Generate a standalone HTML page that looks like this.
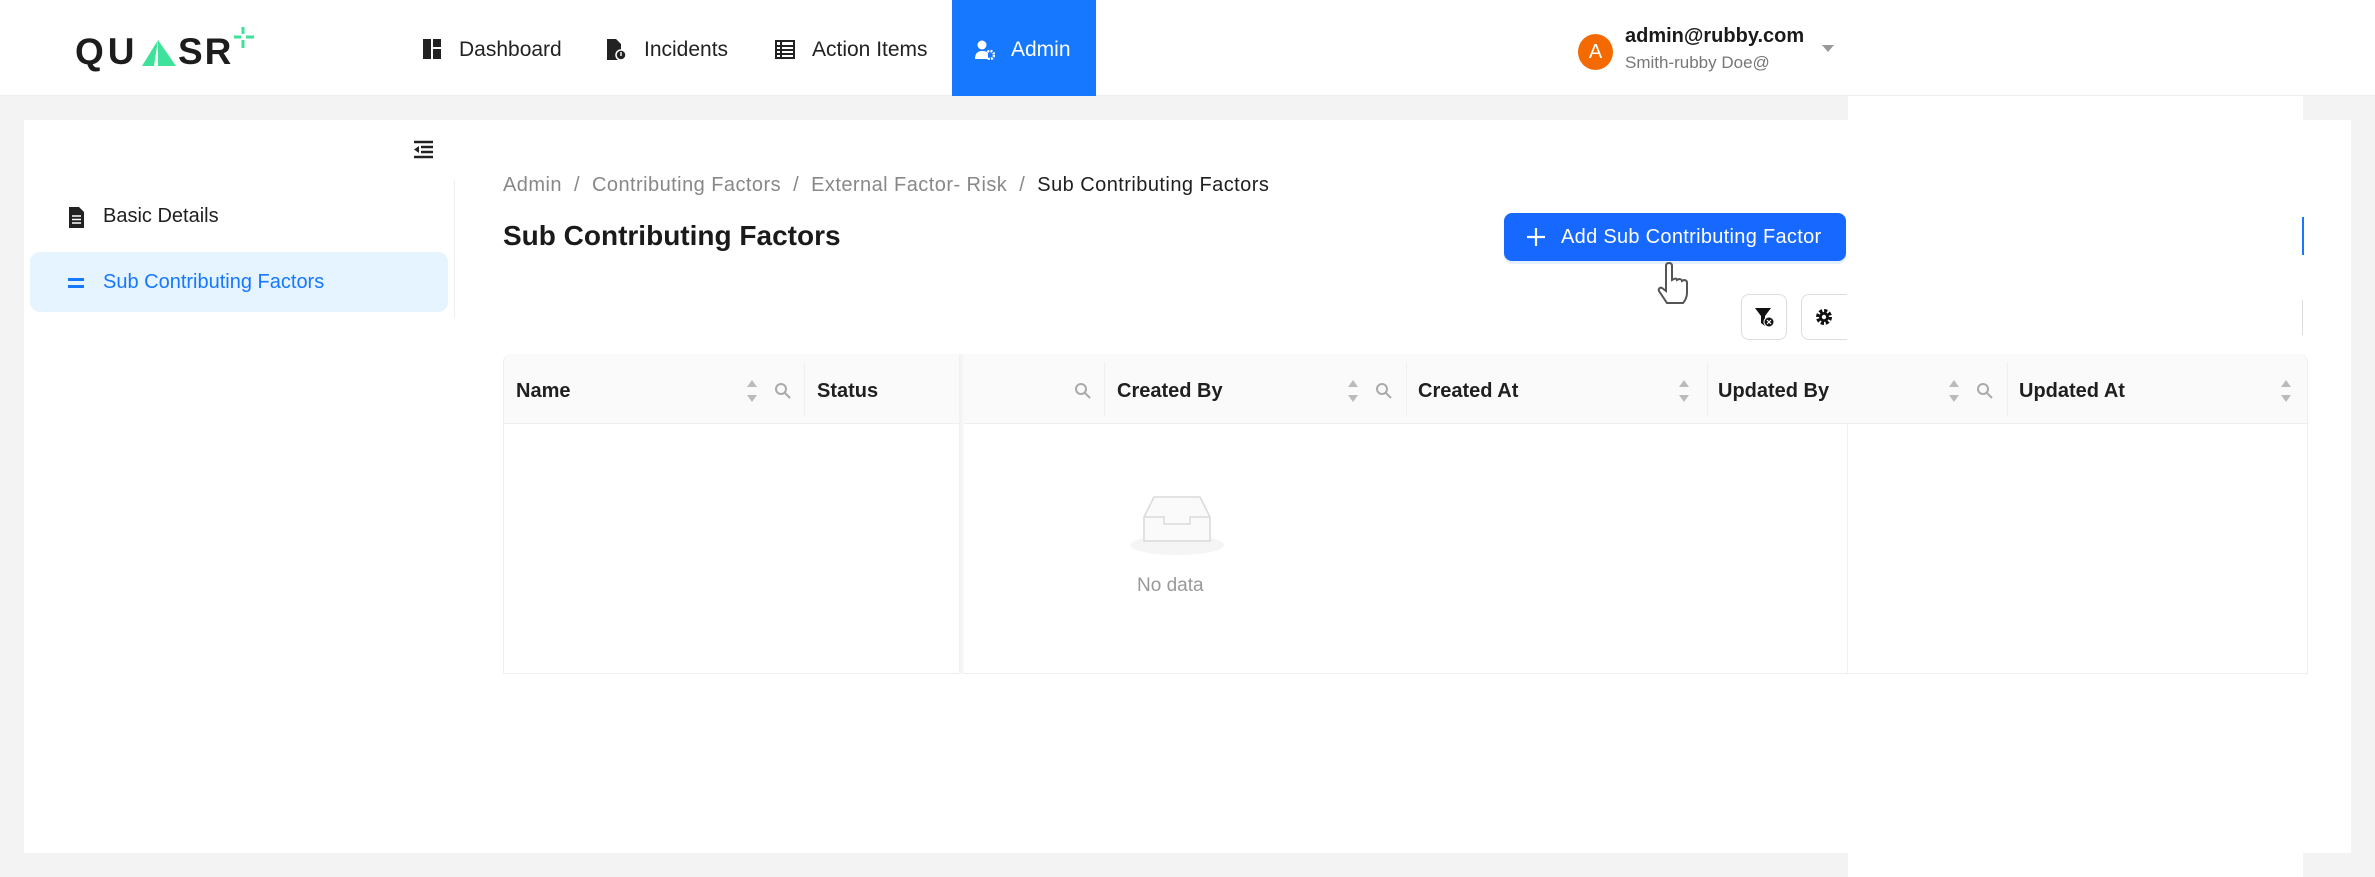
<!DOCTYPE html>
<html><head><meta charset="utf-8"><style>
*{box-sizing:border-box;margin:0;padding:0}
body{width:2375px;height:877px;background:#f3f3f3;font-family:"Liberation Sans",sans-serif;position:relative;overflow:hidden;color:#1f1f1f}
.abs{position:absolute}
.hdr{left:0;top:0;width:2375px;height:96px;background:#fff;border-bottom:1px solid #ececec}
.nav{top:0;height:96px;display:flex;align-items:center;font-size:21px;color:#222;padding-top:4px}
.card{left:24px;top:120px;width:2327px;height:733px;background:#fff}
.th{top:354px;height:70px;background:#fafafa;border-bottom:1px solid #eee;font-size:20px;font-weight:bold;display:flex;align-items:center}
.vl{width:1px;background:#f0f0f0}
</style></head><body>
<div class="abs hdr"></div>
<!-- logo -->
<div class="abs" style="left:75px;top:29px;font-size:37px;font-weight:bold;letter-spacing:4px;color:#1d1d1d;line-height:45px">QU</div>
<svg class="abs" style="left:140px;top:40px" width="36" height="26"><polygon points="18,0 36,26 18,26" fill="#3ee29a"/><polygon points="18,0 14,26 2,26" fill="#3ee29a"/></svg>
<div class="abs" style="left:178px;top:29px;font-size:37px;font-weight:bold;letter-spacing:2px;color:#1d1d1d;line-height:45px">SR</div>
<svg class="abs" style="left:232px;top:26px" width="24" height="24"><path d="M11 1v7M11 14v8M2 11h7M14 11h8" stroke="#3ee29a" stroke-width="3"/></svg>
<!-- nav -->
<svg class="abs" style="left:423px;top:39px" width="18" height="20"><rect x="0" y="0" width="8" height="20" fill="#222"/><rect x="10" y="0" width="8" height="8" fill="#222"/><rect x="10" y="10" width="8" height="10" fill="#222"/></svg>
<div class="abs nav" style="left:459px">Dashboard</div>
<svg class="abs" style="left:607px;top:39px" width="20" height="21"><path d="M0 0h9l5 5v16H0z" fill="#222"/><circle cx="14" cy="16" r="5" fill="#222" stroke="#fff" stroke-width="1.5"/><rect x="13.3" y="13" width="1.4" height="4" fill="#fff"/></svg>
<div class="abs nav" style="left:644px">Incidents</div>
<svg class="abs" style="left:775px;top:40px" width="20" height="19"><rect x="1" y="1" width="18" height="17" fill="none" stroke="#222" stroke-width="2"/><path d="M1 6h18M1 10h18M1 14h18M6 1v17" stroke="#222" stroke-width="2"/></svg>
<div class="abs nav" style="left:812px">Action Items</div>
<div class="abs" style="left:952px;top:0;width:144px;height:96px;background:#1677ff"></div>
<svg class="abs" style="left:975px;top:40px" width="20" height="20"><circle cx="7" cy="5" r="4.5" fill="#fff"/><path d="M0 19c0-6 3-8 7-8s5 1 6 2v6z" fill="#fff"/><circle cx="15" cy="15" r="4" fill="none" stroke="#fff" stroke-width="2.5" stroke-dasharray="2 1.2"/></svg>
<div class="abs nav" style="left:1011px;color:#fff">Admin</div>
<!-- user -->
<div class="abs" style="left:1578px;top:34px;width:35px;height:36px;border-radius:50%;background:#f56a00;color:#fff;font-size:20px;text-align:center;line-height:36px">A</div>
<div class="abs" style="left:1625px;top:25px;font-size:20px;font-weight:bold;color:#1a1a1a">admin@rubby.com</div>
<div class="abs" style="left:1625px;top:53px;font-size:17px;color:#777">Smith-rubby Doe@</div>
<div class="abs" style="left:1822px;top:45px;width:0;height:0;border-left:6px solid transparent;border-right:6px solid transparent;border-top:7px solid #999"></div>
<!-- card -->
<div class="abs card"></div>
<div class="abs" style="left:1848px;top:96px;width:455px;height:781px;background:#fff"></div>
<svg class="abs" style="left:413px;top:140px" width="22" height="20"><path d="M1 2h19M8 7h12M8 12h12M1 17h19" stroke="#222" stroke-width="2.5"/><path d="M6 6l-5 3.5 5 3.5z" fill="#222"/></svg>
<div class="abs vl" style="left:454px;top:180px;height:138px;background:#eee"></div>
<svg class="abs" style="left:69px;top:207px" width="15" height="21"><path d="M0 0h10l5 5v16H0z" fill="#222"/><path d="M3 9h9M3 12.5h9M3 16h9" stroke="#fff" stroke-width="1.5"/></svg>
<div class="abs" style="left:103px;top:205px;font-size:20px">Basic Details</div>
<div class="abs" style="left:30px;top:252px;width:418px;height:60px;border-radius:10px;background:#e6f4ff"></div>
<div class="abs" style="left:68px;top:278px;width:16px;height:3px;background:#1677ff"></div>
<div class="abs" style="left:68px;top:285px;width:16px;height:3px;background:#1677ff"></div>
<div class="abs" style="left:103px;top:271px;font-size:20px;color:#1677ff">Sub Contributing Factors</div>
<!-- breadcrumb -->
<div class="abs" style="left:503px;top:174px;font-size:20px;color:#888;white-space:pre;letter-spacing:0.45px">Admin  /  Contributing Factors  /  External Factor- Risk  /  <span style="color:#1f1f1f">Sub Contributing Factors</span></div>
<div class="abs" style="left:503px;top:220px;font-size:28px;font-weight:bold;color:#1a1a1a">Sub Contributing Factors</div>
<div class="abs" style="left:1504px;top:213px;width:342px;height:48px;border-radius:8px;background:#1668ff;box-shadow:0 3px 0 #e4efff;color:#fff;font-size:20px;line-height:48px;padding-left:57px;letter-spacing:0.3px">Add Sub Contributing Factor</div>
<svg class="abs" style="left:1527px;top:228px" width="18" height="18"><path d="M9 0v18M0 9h18" stroke="#fff" stroke-width="2.2"/></svg>
<svg class="abs" style="left:1655px;top:261px" width="44" height="52"><path d="M14 2c2 0 3 1 3 3v14l2-1c2-1 3 0 3 1l2-1c2 0 3 1 3 2l2-1c2 0 3 1 3 3v10c0 4-2 8-4 10H12L4 30c-1-2 1-4 3-3l4 3V5c0-2 1-3 3-3z" fill="#fff" stroke="#555" stroke-width="2"/></svg>
<div class="abs" style="left:2302px;top:217px;width:2px;height:38px;background:#1677ff"></div>
<div class="abs" style="left:2302px;top:300px;width:1px;height:35px;background:#ddd"></div>
<div class="abs" style="left:1741px;top:294px;width:46px;height:46px;border:1px solid #ddd;border-radius:8px;background:#fff"></div>
<svg class="abs" style="left:1755px;top:308px" width="20" height="20"><path d="M0 0h16l-6 8v10l-4-3V8z" fill="#111"/><circle cx="14" cy="14" r="5" fill="#111" stroke="#fff" stroke-width="1"/><path d="M12 12l4 4M16 12l-4 4" stroke="#fff" stroke-width="1.2"/></svg>
<div class="abs" style="left:1801px;top:294px;width:46px;height:46px;border:1px solid #ddd;border-right:none;border-radius:8px 0 0 8px;background:#fff"></div>
<svg class="abs" style="left:1814px;top:307px" width="20" height="20"><circle cx="10" cy="10" r="6" fill="none" stroke="#111" stroke-width="4" stroke-dasharray="3 1.7"/><circle cx="10" cy="10" r="5" fill="#111"/><circle cx="10" cy="10" r="2.2" fill="#fff"/></svg>
<!-- table -->
<div class="abs" style="left:503px;top:354px;width:1805px;height:320px;border:1px solid #eee;border-radius:8px 8px 0 0;background:#fff"></div>
<div class="abs th" style="left:504px;width:1803px;border-radius:8px 8px 0 0"></div>
<div class="abs vl" style="left:804px;top:362px;height:54px"></div>
<div class="abs" style="left:959px;top:354px;width:5px;height:320px;background:linear-gradient(90deg,#f0f0f0,#fafafa)"></div>
<div class="abs vl" style="left:1104px;top:362px;height:54px"></div>
<div class="abs vl" style="left:1406px;top:362px;height:54px"></div>
<div class="abs vl" style="left:1707px;top:362px;height:54px"></div>
<div class="abs vl" style="left:2007px;top:362px;height:54px"></div>
<div class="abs vl" style="left:1847px;top:424px;height:250px"></div>
<div class="abs" style="left:516px;top:380px;font-size:20px;font-weight:bold">Name</div>
<div class="abs" style="left:817px;top:380px;font-size:20px;font-weight:bold">Status</div>
<div class="abs" style="left:1117px;top:380px;font-size:20px;font-weight:bold">Created By</div>
<div class="abs" style="left:1418px;top:380px;font-size:20px;font-weight:bold">Created At</div>
<div class="abs" style="left:1718px;top:380px;font-size:20px;font-weight:bold">Updated By</div>
<div class="abs" style="left:2019px;top:380px;font-size:20px;font-weight:bold">Updated At</div>
<svg width="0" height="0" style="position:absolute"><defs>
<g id="s"><path d="M6 0l5 7H1z M6 22l5-7H1z" fill="#bbb"/></g>
<g id="q"><circle cx="7" cy="7" r="5" fill="none" stroke="#aaa" stroke-width="2"/><path d="M11 11l5 5" stroke="#aaa" stroke-width="2"/></g>
</defs></svg>
<svg class="abs" style="left:746px;top:380px" width="12" height="22"><use href="#s"/></svg>
<svg class="abs" style="left:774px;top:382px" width="17" height="17"><use href="#q"/></svg>
<svg class="abs" style="left:1074px;top:382px" width="17" height="17"><use href="#q"/></svg>
<svg class="abs" style="left:1347px;top:380px" width="12" height="22"><use href="#s"/></svg>
<svg class="abs" style="left:1375px;top:382px" width="17" height="17"><use href="#q"/></svg>
<svg class="abs" style="left:1678px;top:380px" width="12" height="22"><use href="#s"/></svg>
<svg class="abs" style="left:1948px;top:380px" width="12" height="22"><use href="#s"/></svg>
<svg class="abs" style="left:1976px;top:382px" width="17" height="17"><use href="#q"/></svg>
<svg class="abs" style="left:2280px;top:380px" width="12" height="22"><use href="#s"/></svg>
<!-- empty -->
<svg class="abs" style="left:1127px;top:495px" width="100" height="62"><ellipse cx="50" cy="50" rx="47" ry="10" fill="#f5f5f5"/><path d="M17 22L27 2h46l10 20v24H17z" fill="#fafafa" stroke="#d9d9d9" stroke-width="1.5"/><path d="M17 22h20v7h26v-7h20" fill="none" stroke="#d9d9d9" stroke-width="1.5"/></svg>
<div class="abs" style="left:1137px;top:575px;font-size:19px;color:#999">No data</div>
</body></html>
